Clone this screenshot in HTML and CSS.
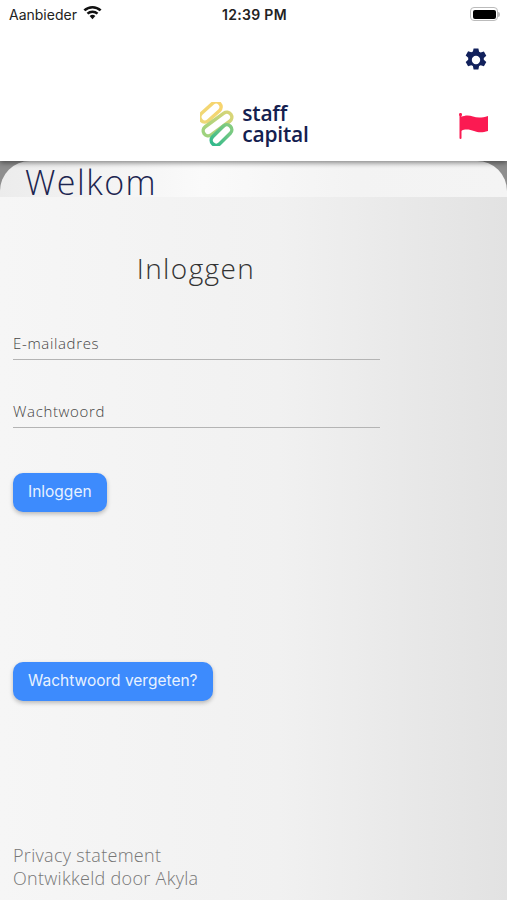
FILE: index.html
```html
<!DOCTYPE html>
<html lang="nl">

<head>
    <meta charset="UTF-8">
    <title>Staff Capital</title>
    <link rel="stylesheet" href="styles.css">
</head>

<body>
    <div class="statusbar">
        <div class="carrier">
            <span>Aanbieder</span>
            <svg class="wifi" width="19" height="15" viewBox="0 0 20 15">
                <path d="M10 14.500 7 11.200a4.400 4.400 0 0 1 6 0z" />
                <path d="M5.600 9.700 3.800 7.800a9.200 9.200 0 0 1 12.400 0l-1.800 1.900a6.600 6.600 0 0 0-8.800 0z" />
                <path d="M2.400 6.300.5 4.300a14 14 0 0 1 19 0l-1.900 2a11.300 11.300 0 0 0-15.200 0z" />
            </svg>
        </div>
        <div class="clock">12:39 PM</div>
        <div class="battery">
            <div class="battery-body"><div class="battery-level"></div></div>
            <div class="battery-tip"></div>
        </div>
    </div>

    <header class="topbar">
        <div class="topbar-actions">
            <svg class="gear" width="24" height="24" viewBox="0 0 24 24">
                <path fill-rule="evenodd" d="M9.600 0h4.800l.7 3.300 1.600.9 3.200-1 2.400 4.100-2.500 2.300v1.800l2.500 2.300-2.400 4.100-3.200-1-1.600.9-.7 3.300H9.600l-.7-3.300-1.600-.9-3.200 1-2.400-4.100 2.500-2.300V9.300L1.700 7l2.400-4.100 3.200 1 1.600-.9zM12 7.400a4.200 4.200 0 1 0 0 8.400 4.200 4.200 0 0 0 0-8.400z" transform="translate(0 .4)" />
            </svg>
        </div>
        <div class="topbar-brand">
            <div class="logo">
                <svg width="34" height="44" viewBox="0 0 34 44">
                    <defs>
                        <linearGradient id="clip-top">
                            <stop offset="0" stop-color="#eed877" />
                            <stop offset="1" stop-color="#f7d46e" />
                        </linearGradient>
                        <linearGradient id="clip-mid">
                            <stop offset="0" stop-color="#9dd27e" />
                            <stop offset="1" stop-color="#d8d577" />
                        </linearGradient>
                        <linearGradient id="clip-bottom">
                            <stop offset="0" stop-color="#33ba8c" />
                            <stop offset="1" stop-color="#84cc80" />
                        </linearGradient>
                    </defs>
                    <g fill="none" stroke-width="3.500">
                        <rect x="-2" y="5" width="25" height="10" rx="5" stroke="url(#clip-top)" transform="rotate(-42 10.500 10)" />
                        <rect x="1" y="17" width="33" height="10" rx="5" stroke="url(#clip-mid)" transform="rotate(-36 17.500 22)" />
                        <rect x="9" y="28" width="25" height="10" rx="5" stroke="url(#clip-bottom)" transform="rotate(-45 21.500 33)" />
                    </g>
                </svg>
                <div class="logo-text">staff<br>capital</div>
            </div>
            <svg class="flag" width="30" height="26" viewBox="0 0 30 26">
                <rect x=".5" y="0" width="2" height="26" rx="1" />
                <circle cx="1.500" cy="1.500" r="1.500" />
                <path d="M2 4c4-2 8-2 12-.5s9 1.500 15-.5v15c-6 2-10 1.500-14 0S6 15.500 2 18z" />
            </svg>
        </div>
    </header>

    <main class="page">
        <div class="hero">
            <h1>Welkom</h1>
        </div>
        <div class="content">
            <h2>Inloggen</h2>
            <form class="login">
                <div class="field">E-mailadres</div>
                <div class="field">Wachtwoord</div>
                <a class="btn btn-login" href="#">Inloggen</a>
                <a class="btn btn-forgot" href="#">Wachtwoord vergeten?</a>
            </form>
            <footer class="links">
                <p>Privacy statement</p>
                <p>Ontwikkeld door Akyla</p>
            </footer>
        </div>
    </main>
</body>

</html>
```

FILE: styles.css
```css
html,
body,
h1,
h2,
p {
    margin: 0;
    padding: 0;
}

body {
    width: 507px;
    height: 900px;
    overflow: hidden;
    background: #fff;
    display: flex;
    flex-direction: column;
    font-family: "Inter", "Liberation Sans", sans-serif;
}

/* status bar */
.statusbar {
    height: 28px;
    padding: 0 7px 0 9px;
    display: flex;
    align-items: center;
    justify-content: space-between;
    font-size: 14px;
    color: #222;
    flex: none;
    position: relative;
    z-index: 3;
    background: #fff;
}

.carrier {
    display: flex;
    align-items: center;
    gap: 6px;
    width: 130px;
}

.wifi {
    fill: #111;
    margin-top: -3px;
}

.clock {
    font-weight: 600;
    letter-spacing: .3px;
}

.battery {
    display: flex;
    align-items: center;
    width: 130px;
    justify-content: flex-end;
}

.battery-body {
    width: 28px;
    height: 14px;
    border: 1.5px solid #bbb;
    border-radius: 4px;
    padding: 1.5px;
    box-sizing: border-box;
}

.battery-level {
    height: 100%;
    background: #000;
    border-radius: 2px;
}

.battery-tip {
    width: 2px;
    height: 5px;
    background: #bbb;
    border-radius: 0 2px 2px 0;
}

/* header */
.topbar {
    height: 133px;
    background: #fff;
    box-shadow: 0 2px 5px rgba(0, 0, 0, .45);
    flex: none;
    position: relative;
    z-index: 2;
}

.topbar-actions {
    height: 47px;
    padding: 20px 19px 0 0;
    box-sizing: border-box;
    display: flex;
    justify-content: flex-end;
    align-items: flex-start;
}

.gear {
    fill: #12215c;
}

.topbar-brand {
    height: 60px;
    margin-top: 19px;
    display: flex;
    align-items: center;
    justify-content: center;
    position: relative;
}

.logo {
    display: flex;
    align-items: center;
    gap: 8px;
    margin-left: 2px;
}

.logo-text {
    font-family: "Open Sans", "Liberation Sans", sans-serif;
    font-size: 21px;
    line-height: 21px;
    font-weight: 600;
    color: #14204f;
    letter-spacing: -.2px;
}

/* the flag sits beside the centered logo */
.flag {
    position: absolute;
    right: 18px;
    top: 19px;
    fill: #fb1a52;
}

/* page */
.page {
    flex: 1;
    background: #8e8e8e;
    display: flex;
    flex-direction: column;
    min-height: 0;
}

.hero {
    height: 36px;
    flex: none;
    border-radius: 30px 30px 0 0;
    background: linear-gradient(90deg, #ececec, #fafafa 40%, #f3f3f3 70%, #f4f4f4);
    padding-left: 25px;
}

.hero h1 {
    font-family: "Open Sans", "Liberation Sans", sans-serif;
    font-weight: 300;
    font-size: 34px;
    line-height: 42px;
    color: #1c2550;
    letter-spacing: 1.5px;
}

.content {
    flex: 1;
    min-height: 0;
    background: linear-gradient(90deg, #f6f6f6, #f1f1f1 55%, #e2e2e2);
    padding: 0 13px;
    display: flex;
    flex-direction: column;
}

.content h2 {
    width: 366px;
    margin-top: 53px;
    text-align: center;
    font-family: "Open Sans", "Liberation Sans", sans-serif;
    font-weight: 300;
    font-size: 28px;
    line-height: 37px;
    color: #333;
    letter-spacing: 1.4px;
}

.login {
    flex: 1;
    display: flex;
    flex-direction: column;
    align-items: flex-start;
}

.field {
    width: 367px;
    height: 30px;
    line-height: 26px;
    border-bottom: 1.5px solid #b4b4b4;
    font-family: "Open Sans", "Liberation Sans", sans-serif;
    font-weight: 300;
    font-size: 15px;
    color: #444;
    letter-spacing: .65px;
    margin-top: 38px;
    box-sizing: border-box;
}

.field:first-child {
    margin-top: 43px;
}

.btn {
    display: block;
    height: 39px;
    line-height: 38px;
    padding: 0 15px;
    background: #3d8bfd;
    border-radius: 10px;
    box-shadow: 0 2px 4px rgba(0, 0, 0, .25);
    color: #e8f2ff;
    font-size: 15.5px;
    text-decoration: none;
}

.btn-login {
    margin-top: 45px;
}

.btn-forgot {
    margin-top: 150px;
}

.links {
    padding-bottom: 10px;
    font-family: "Open Sans", "Liberation Sans", sans-serif;
    font-weight: 300;
    font-size: 18px;
    line-height: 23px;
    color: #777;
    letter-spacing: .3px;
}
```
